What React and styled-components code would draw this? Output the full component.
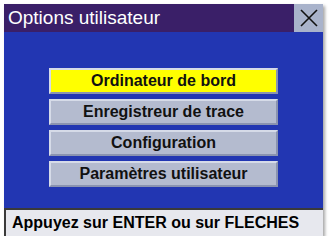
import React from 'react';
import styled, { createGlobalStyle } from 'styled-components';

const GlobalStyle = createGlobalStyle`
  body {
    margin: 0;
    background: #ffffff;
    font-family: "Liberation Sans", Arial, sans-serif;
  }
`;

const Screen = styled.div`
  margin: 4px 0 0 4px;
  width: 319px;
  height: 232px;
  display: flex;
  flex-direction: column;
  box-shadow: 2px 2px 3px rgba(0, 0, 0, 0.35);
`;

const TitleBar = styled.div`
  height: 28px;
  display: flex;
  align-items: center;
  background: #3a1f68;
`;

const Title = styled.div`
  flex: 1;
  padding-left: 4px;
  color: #ffffff;
  font-size: 19px;
`;

const CloseButton = styled.div`
  width: 29px;
  height: 28px;
  display: flex;
  align-items: center;
  justify-content: center;
  background: #a9b3cb;
`;

const Body = styled.div`
  flex: 1;
  background: #2236b2;
  display: flex;
  flex-direction: column;
  align-items: center;
  padding-top: 36px;
  gap: 5px;
`;

const MenuButton = styled.div`
  width: 225px;
  height: 22px;
  display: flex;
  align-items: center;
  justify-content: center;
  background: ${p => (p.$active ? '#ffff00' : '#b4bbcf')};
  border: 2px solid;
  border-color: #d6dbe8 #8a93b0 #8a93b0 #d6dbe8;
  color: #111111;
  font-size: 16px;
  font-weight: bold;
`;

const StatusBar = styled.div`
  height: 26px;
  display: flex;
  align-items: center;
  padding-left: 6px;
  background: #e7e8ee;
  border-top: 2px solid #3a3a3a;
  border-left: 2px solid #3a3a3a;
  color: #000000;
  font-size: 16px;
  font-weight: bold;
`;

const items = [
  'Ordinateur de bord',
  'Enregistreur de trace',
  'Configuration',
  'Paramètres utilisateur',
];

const App = () => {
  return (
    <>
      <GlobalStyle />
      <Screen>
        <TitleBar>
          <Title>Options utilisateur</Title>
          <CloseButton>
            <svg width="20" height="20" viewBox="0 0 20 20">
              <path d="M2 2 L18 18 M18 2 L2 18" stroke="#111" strokeWidth="1.6" />
            </svg>
          </CloseButton>
        </TitleBar>
        <Body>
          {items.map((label, i) => (
            <MenuButton key={label} $active={i === 0}>
              {label}
            </MenuButton>
          ))}
        </Body>
        <StatusBar>Appuyez sur ENTER ou sur FLECHES</StatusBar>
      </Screen>
    </>
  );
};

export default App;
